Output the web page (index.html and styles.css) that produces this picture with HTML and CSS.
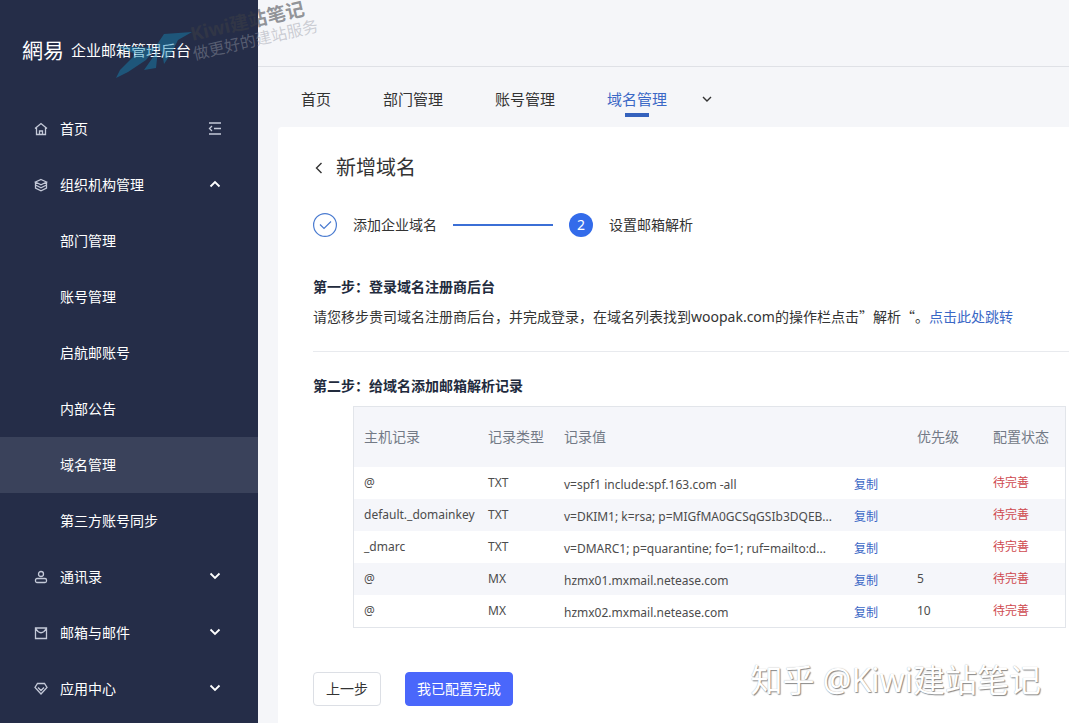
FILE: index.html
```html
<!DOCTYPE html>
<html lang="zh-CN">
<head>
<meta charset="utf-8">
<title>企业邮箱管理后台</title>
<link rel="stylesheet" href="styles.css">
</head>
<body>
<div class="app">
  <aside class="sidebar">
    <div class="brand">
      <span class="brand-logo">網易</span>
      <span class="brand-name">企业邮箱管理后台</span>
    </div>
    <nav class="menu">
      <a class="item" href="#">
        <svg class="icon" viewBox="0 0 14 14"><path d="M1 6.500 7 1.500l6 5M2.500 5.500v7h9v-7M5.500 12.500V9h3v3.500"/></svg>
        <span class="label">首页</span>
        <svg class="icon toggle" viewBox="0 0 14 14"><path d="M1 1h12M6 6.500h7M1 12h12M4 4 1.500 6.500 4 9"/></svg>
      </a>
      <a class="item" href="#">
        <svg class="icon" viewBox="0 0 14 14"><path d="M7 1.500 12.500 4 7 6.800 1.500 4zM1.500 4v6L7 12.800 12.500 10V4M1.500 7 7 9.800 12.500 7"/></svg>
        <span class="label">组织机构管理</span>
        <svg class="icon arrow" viewBox="0 0 14 14"><path d="m2.500 8.500 4.500-4.500 4.500 4.500"/></svg>
      </a>
      <a class="item sub" href="#">部门管理</a>
      <a class="item sub" href="#">账号管理</a>
      <a class="item sub" href="#">启航邮账号</a>
      <a class="item sub" href="#">内部公告</a>
      <a class="item sub active" href="#">域名管理</a>
      <a class="item sub" href="#">第三方账号同步</a>
      <a class="item" href="#">
        <svg class="icon" viewBox="0 0 14 14"><circle cx="7" cy="4" r="2.500"/><rect x="1.500" y="8.500" width="11" height="4" rx="1.500"/></svg>
        <span class="label">通讯录</span>
        <svg class="icon arrow" viewBox="0 0 14 14"><path d="M2.500 3.500 7 8l4.500-4.500"/></svg>
      </a>
      <a class="item" href="#">
        <svg class="icon" viewBox="0 0 14 14"><path d="M1.500 2h11v10.500h-11zM1.500 2.500 4 5.500Q7 8 10 5.500l2.500-3"/></svg>
        <span class="label">邮箱与邮件</span>
        <svg class="icon arrow" viewBox="0 0 14 14"><path d="M2.500 3.500 7 8l4.500-4.500"/></svg>
      </a>
      <a class="item" href="#">
        <svg class="icon" viewBox="0 0 14 14"><path d="M3.500 1.500h7l2.500 4-6 6.500-6-6.500zM4 5.500l3 3 3-3"/></svg>
        <span class="label">应用中心</span>
        <svg class="icon arrow" viewBox="0 0 14 14"><path d="M2.500 3.500 7 8l4.500-4.500"/></svg>
      </a>
    </nav>
  </aside>
  <div class="main">
    <header class="topbar"></header>
    <nav class="tabs">
      <a class="tab" href="#">首页</a>
      <a class="tab" href="#">部门管理</a>
      <a class="tab" href="#">账号管理</a>
      <a class="tab current" href="#">域名管理</a>
      <button class="more" aria-label="更多"><svg viewBox="0 0 14 14"><path d="M3 5l4 4 4-4"/></svg></button>
    </nav>
    <main class="card">
      <div class="title-row">
        <button class="back" aria-label="返回"><svg viewBox="0 0 14 14"><path d="M8.500 2 3.500 7l5 5"/></svg></button>
        <h1>新增域名</h1>
      </div>
      <div class="steps">
        <svg class="done" viewBox="0 0 24 24"><circle cx="12" cy="12" r="11.400"/><path d="m7 11.500 4 4 7-7"/></svg>
        <span>添加企业域名</span>
        <i class="line"></i>
        <b class="num">2</b>
        <span>设置邮箱解析</span>
      </div>
      <h2>第一步：登录域名注册商后台</h2>
      <p class="desc">请您移步贵司域名注册商后台，并完成登录，在域名列表找到woopak.com的操作栏点击<span class="cjk">”解析“</span>。<a href="#">点击此处跳转</a></p>
      <h2 class="second">第二步：给域名添加邮箱解析记录</h2>
      <table class="records">
        <colgroup><col class="c-host"><col class="c-type"><col><col class="c-prio"><col class="c-state"></colgroup>
        <thead>
          <tr><th>主机记录</th><th>记录类型</th><th>记录值</th><th>优先级</th><th>配置状态</th></tr>
        </thead>
        <tbody>
          <tr><td>@</td><td>TXT</td><td><div class="value"><span>v=spf1 include:spf.163.com -all</span><button>复制</button></div></td><td></td><td class="state">待完善</td></tr>
          <tr><td>default._domainkey</td><td>TXT</td><td><div class="value"><span>v=DKIM1; k=rsa; p=MIGfMA0GCSqGSIb3DQEB...</span><button>复制</button></div></td><td></td><td class="state">待完善</td></tr>
          <tr><td>_dmarc</td><td>TXT</td><td><div class="value"><span>v=DMARC1; p=quarantine; fo=1; ruf=mailto:d...</span><button>复制</button></div></td><td></td><td class="state">待完善</td></tr>
          <tr><td>@</td><td>MX</td><td><div class="value"><span>hzmx01.mxmail.netease.com</span><button>复制</button></div></td><td>5</td><td class="state">待完善</td></tr>
          <tr><td>@</td><td>MX</td><td><div class="value"><span>hzmx02.mxmail.netease.com</span><button>复制</button></div></td><td>10</td><td class="state">待完善</td></tr>
        </tbody>
      </table>
      <div class="actions">
        <button class="btn">上一步</button>
        <button class="btn primary">我已配置完成</button>
      </div>
    </main>
  </div>
  <div class="mark">
    <svg class="bird" viewBox="0 0 84 50"><path d="M4 48 8 40 24 24 2 16 44 18 34 30 16 42zM32 40 46 20 44 38zM44 16 52 4 80 2 66 10 60 22 52 34 50 22z"/></svg>
    <div class="mark-text">
      <span class="mark-name">Kiwi建站笔记</span>
      <span class="mark-slogan">做更好的建站服务</span>
    </div>
  </div>
  <div class="credit">知乎 @Kiwi建站笔记</div>
</div>
</body>
</html>
```
FILE: styles.css
```css
* { box-sizing: border-box; }
body {
  margin: 0;
  font: 14px/20px "Noto Sans", "Noto Sans CJK SC", sans-serif;
  color: #333;
  background: #f5f6f9;
}
a { color: inherit; text-decoration: none; }
button { font: inherit; color: inherit; padding: 0; border: 0; background: none; cursor: pointer; }
svg { fill: none; stroke: currentColor; }
.app { position: relative; display: flex; min-height: 100vh; overflow: hidden; }

.sidebar { flex: 0 0 258px; background: #252d48; color: #fff; }
.brand { display: flex; align-items: center; gap: 7px; height: 101px; padding: 0 0 2px 22px; }
.brand-logo { font-size: 21px; }
.brand-name { font-size: 15px; }
.menu { height: calc(100vh - 101px); overflow: hidden; }
.item { display: flex; align-items: center; height: 56px; padding: 0 36px 0 34px; }
.item.sub { padding-left: 60px; }
.item.active { background: #3a425b; }
.icon { width: 14px; height: 14px; color: #c4c9d8; stroke-width: 1.300; }
.label { flex: 1; margin-left: 12px; }
.icon.arrow { color: #fff; stroke-width: 1.800; }

.main { flex: 1; min-width: 0; display: flex; flex-direction: column; }
.topbar { height: 67px; border-bottom: 1px solid #dfe1e6; }
.tabs { display: flex; align-items: center; gap: 52px; height: 60px; padding: 4px 0 0 43px; font-size: 15px; }
.tab { position: relative; }
.tab.current { color: #3b68c6; }
.tab.current::after { content: ""; position: absolute; left: 18px; bottom: -8px; width: 24px; height: 4px; background: #3562bd; }
.more { height: 14px; margin-left: -19px; }
.more svg, .back svg { display: block; width: 14px; height: 14px; stroke-width: 1.400; }

.card { flex: 1; margin-left: 20px; padding: 27px 0 18px 35px; background: #fff; border-top-left-radius: 4px; }
.title-row { display: flex; align-items: center; gap: 9px; height: 28px; }
h1 { margin: 0; font-size: 20px; line-height: 28px; font-weight: 400; }
.steps { display: flex; align-items: center; gap: 16px; height: 24px; margin-top: 31px; }
.done { width: 24px; height: 24px; color: #4a7bd0; stroke-width: 1.200; }
.line { width: 100px; height: 2px; background: #3b6fd6; }
.num { width: 24px; height: 24px; border-radius: 50%; background: #336bea; color: #fff; font-weight: 400; line-height: 24px; text-align: center; }
h2 { margin: 40px 0 0; font-size: 14px; line-height: 20px; font-weight: 700; color: #222b3d; }
.desc { margin: 9px 0 0; padding-bottom: 24px; border-bottom: 1px solid #e8eaee; white-space: nowrap; }
.cjk { font-family: "Noto Sans CJK SC", sans-serif; }
.desc a { color: #3b68c6; }
h2.second { margin-top: 24px; }

.records { width: calc(100% - 43px); margin: 10px 3px 0 40px; border: 1px solid #e2e5ea; border-collapse: separate; border-spacing: 0; table-layout: fixed; font-size: 12px; color: #4c4c4c; }
.c-host { width: 124px; }
.c-type { width: 76px; }
.c-prio { width: 76px; }
.c-state { width: 82px; }
th { height: 60px; padding: 0 0 0 10px; font-size: 14px; font-weight: 400; text-align: left; color: #737a86; background: #f5f6fa; }
td { height: 32px; padding: 0 0 0 10px; white-space: nowrap; }
tbody tr:nth-child(even) { background: #f5f6fa; }
.value { display: flex; justify-content: space-between; padding: 4px 29px 0 0; }
.value button { font-size: 12px; color: #3b68c6; }
td.state { color: #cf4a50; }

.actions { display: flex; gap: 24px; margin-top: 44px; }
.btn { height: 34px; padding: 0 12px; border: 1px solid #dcdfe5; border-radius: 4px; background: #fff; color: #333; }
.btn.primary { padding: 0 11px; border-color: #4a67fb; background: #4a67fb; color: #fff; }

.mark { position: absolute; left: 112px; top: 0; pointer-events: none; }
.bird { position: absolute; left: 0; top: 30px; width: 84px; height: 50px; fill: #1688b8; stroke: none; opacity: .45; }
.mark-text { position: absolute; left: 77px; top: 9px; display: flex; flex-direction: column; white-space: nowrap; transform: rotate(-13deg); }
.mark-name { padding-left: 2px; font-size: 19px; font-weight: 700; line-height: 22px; color: rgba(60, 62, 70, .55); }
.mark-slogan { font-size: 16px; line-height: 18px; color: rgba(150, 153, 165, .45); }
.credit { position: absolute; right: 28px; bottom: 24px; font-size: 32px; line-height: 40px; color: #fff; text-shadow: 1px 1px 1px #888, 0 0 1px #aaa; white-space: nowrap; pointer-events: none; }
```
